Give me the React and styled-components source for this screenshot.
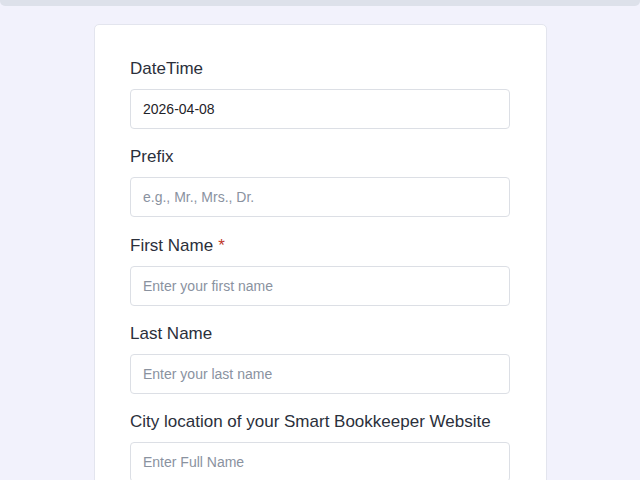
import React from 'react';
import styled, { createGlobalStyle } from 'styled-components';

const GlobalStyle = createGlobalStyle`
  html, body {
    margin: 0;
    padding: 0;
    background: #f2f2fc;
    font-family: "Liberation Sans", Arial, sans-serif;
    overflow: hidden;
  }
  * { box-sizing: border-box; }
`;

const TopBar = styled.div`
  height: 6px;
  background: #dde1ea;
  border-radius: 0 0 5px 5px;
`;

const Page = styled.div`
  display: flex;
  justify-content: flex-start;
  padding: 18px 0 0 94px;
`;

const Card = styled.form`
  width: 453px;
  background: #ffffff;
  border: 1px solid #e3e5ee;
  border-radius: 5px;
  padding: 33px 36px 40px 35px;
  display: flex;
  flex-direction: column;
  gap: 17.3px;
`;

const Field = styled.div`
  display: flex;
  flex-direction: column;
`;

const Label = styled.label`
  font-size: 17px;
  line-height: 21px;
  color: #2b303b;
  margin-bottom: 10px;
`;

const Required = styled.span`
  color: #c0392b;
  margin-left: 5px;
`;

const Input = styled.input`
  height: 40px;
  width: 100%;
  border: 1px solid #dcdfe5;
  border-radius: 4px;
  padding: 0 12px;
  font-family: "Liberation Sans", Arial, sans-serif;
  font-size: 14px;
  color: #1f2329;
  background: #fff;
  outline: none;
  &::placeholder {
    color: #8a929f;
  }
`;

const fields = [
  { label: 'DateTime', value: '2026-04-08' },
  { label: 'Prefix', placeholder: 'e.g., Mr., Mrs., Dr.' },
  { label: 'First Name', placeholder: 'Enter your first name', required: true },
  { label: 'Last Name', placeholder: 'Enter your last name' },
  { label: 'City location of your Smart Bookkeeper Website', placeholder: 'Enter Full Name' },
  { label: 'Email', placeholder: 'Enter your email' },
];

export default function App() {
  return (
    <>
      <GlobalStyle />
      <TopBar />
      <Page>
        <Card onSubmit={(e) => e.preventDefault()}>
          {fields.map((f) => (
            <Field key={f.label}>
              <Label>
                {f.label}
                {f.required ? <Required>*</Required> : null}
              </Label>
              <Input
                type="text"
                defaultValue={f.value}
                placeholder={f.placeholder}
              />
            </Field>
          ))}
        </Card>
      </Page>
    </>
  );
}
